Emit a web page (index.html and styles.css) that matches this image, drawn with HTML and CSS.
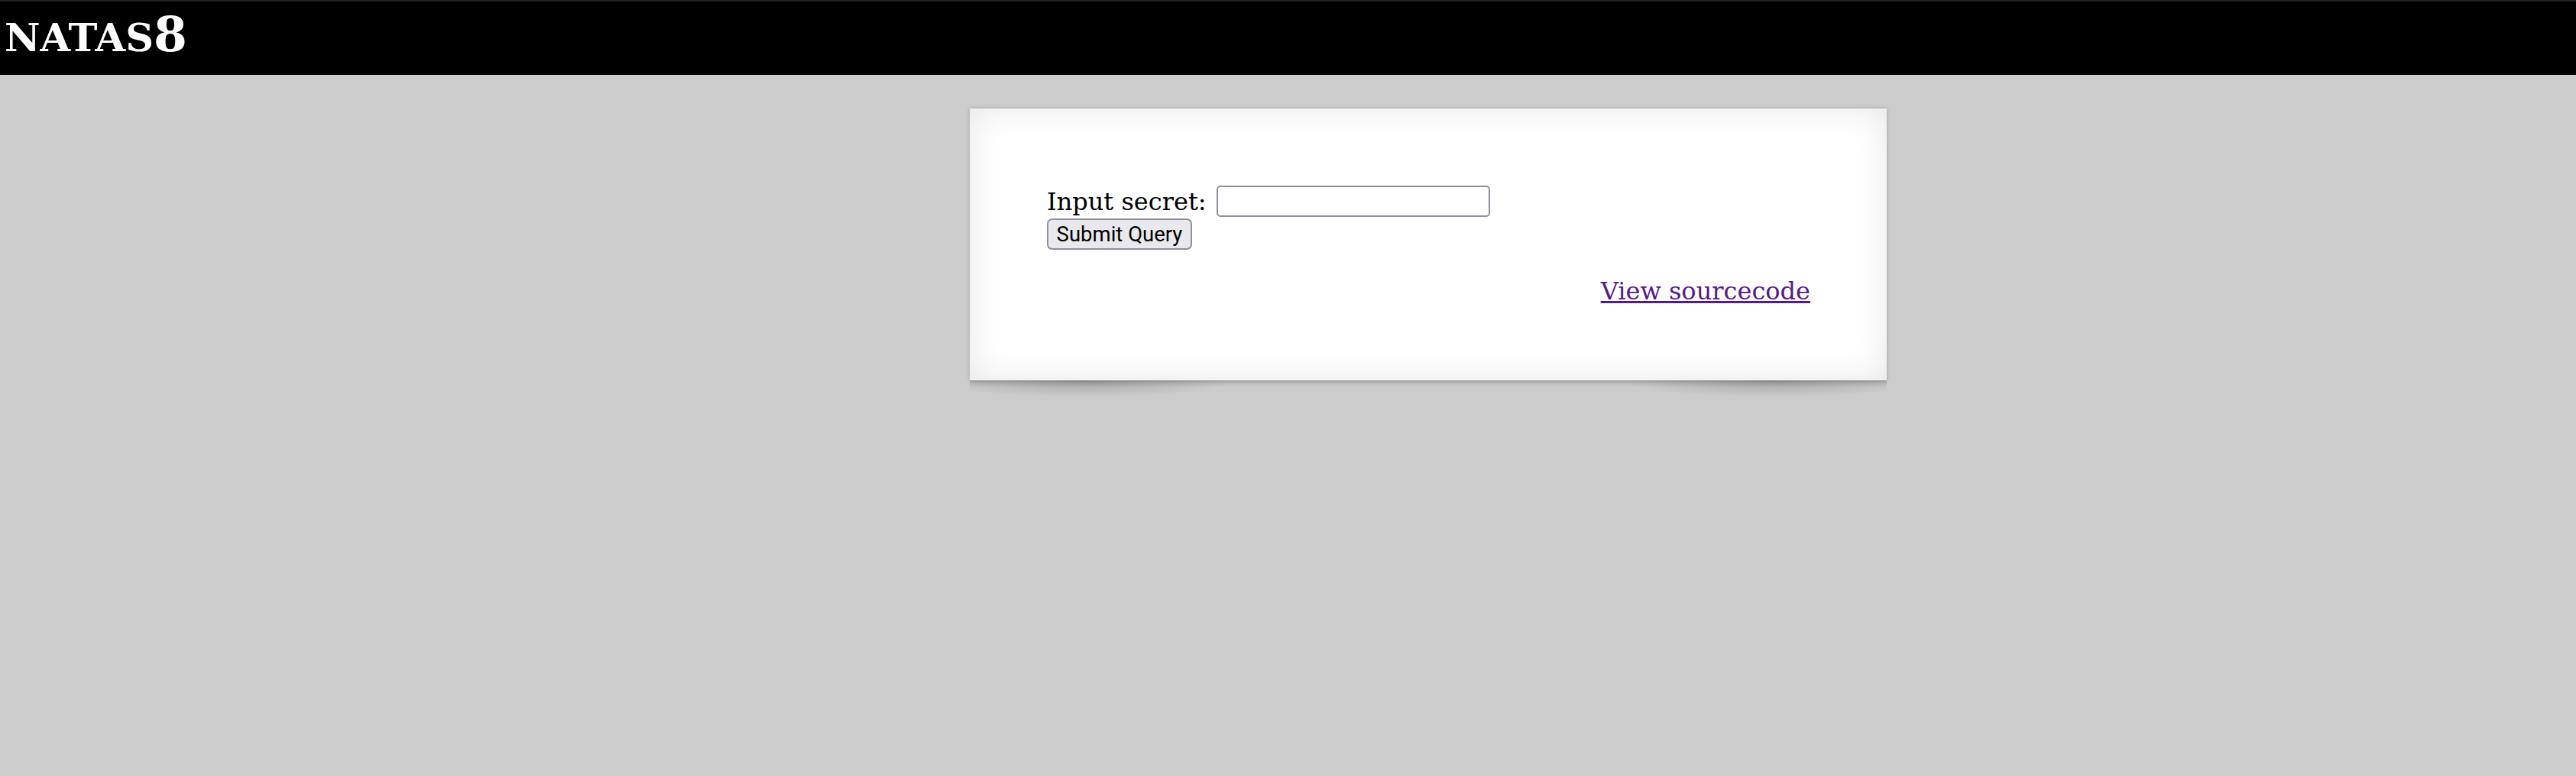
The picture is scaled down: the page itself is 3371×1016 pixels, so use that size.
FILE: index.html
```html
<!DOCTYPE html>
<html>
<head>
<meta charset="utf-8">
<title>natas8</title>
<link rel="stylesheet" href="styles.css">
</head>
<body>
<h1 class="title"><span class="title-word">NATAS</span><span class="title-num">8</span></h1>
<div class="sheet">
  <div class="content">
    <form class="secret-form">
      <div class="row">
        <span class="label">Input secret:</span>
        <input class="field" type="text" name="secret">
      </div>
      <div class="row">
        <button class="submit" type="button">Submit Query</button>
      </div>
    </form>
    <div class="viewsource"><a class="source-link" href="#">View sourcecode</a></div>
  </div>
  <div class="under-shadow"></div>
</div>
</body>
</html>
```

FILE: styles.css
```css
html, body {
  margin: 0;
  padding: 0;
}
body {
  background: #cccccc;
  font-family: "DejaVu Serif", serif;
  font-size: 32px;
}
.title {
  margin: 0;
  border-top: 2px solid #222222;
  background: #000000;
  color: #ffffff;
  font-family: "DejaVu Serif", serif;
  font-weight: bold;
  padding-left: 6px;
  display: flex;
  align-items: baseline;
  line-height: 1;
  padding-top: 12px;
  box-sizing: border-box;
  height: 98px;
}
.title-word {
  font-size: 51px;
}
.title-num {
  font-size: 63px;
}
.sheet {
  margin-top: 44px;
  margin-left: 1269px;
  width: 1200px;
}
.content {
  height: 356px;
  box-sizing: border-box;
  padding: 101px 100px 0 101px;
  background: #ffffff;
  box-shadow:
    0 0 4px rgba(0,0,0,0.25),
    0 0 44px rgba(0,0,0,0.1) inset;
}
.under-shadow {
  height: 22px;
  background:
    radial-gradient(ellipse 200px 22px at 150px 0, rgba(0,0,0,0.2), rgba(0,0,0,0)),
    radial-gradient(ellipse 200px 22px at calc(100% - 150px) 0, rgba(0,0,0,0.2), rgba(0,0,0,0)),
    linear-gradient(to bottom, rgba(0,0,0,0.13), rgba(0,0,0,0) 9px);
}
.secret-form {
  margin: 0;
  display: flex;
  flex-direction: column;
  gap: 2px;
}
.row {
  display: flex;
  align-items: center;
}
.label {
  line-height: 1;
  color: #000;
}
.field {
  margin: 0 0 0 13px;
  width: 358px;
  flex: none;
  height: 41px;
  box-sizing: border-box;
  border: 2px solid #8f8f9d;
  border-radius: 5px;
  background: #fff;
  padding: 0 4px;
  font-size: 24px;
}
.submit {
  margin: 0;
  height: 41px;
  width: 190px;
  flex: none;
  box-sizing: border-box;
  border: 2px solid #8f8f9d;
  border-radius: 7px;
  background: #e9e9ed;
  color: #000;
  font-family: Roboto, "DejaVu Sans", sans-serif;
  font-size: 27.5px;
  padding: 0;
}
.viewsource {
  text-align: right;
  margin-top: 35px;
  line-height: 1.2;
}
.source-link {
  color: #551a8b;
  text-decoration: underline;
}
```
